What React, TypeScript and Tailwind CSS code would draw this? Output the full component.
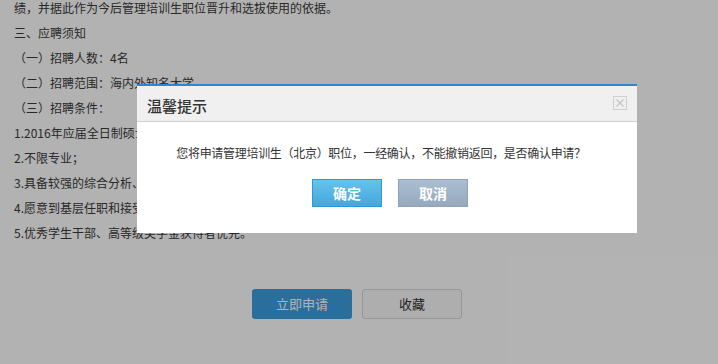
import React from "react";

const lines = [
  "绩，并据此作为今后管理培训生职位晋升和选拔使用的依据。",
  "三、应聘须知",
  "（一）招聘人数：4名",
  "（二）招聘范围：海内外知名大学",
  "（三）招聘条件：",
  "1.2016年应届全日制硕士及以上学历毕业生；",
  "2.不限专业；",
  "3.具备较强的综合分析、沟通协调能力和团队合作精神；",
  "4.愿意到基层任职和接受锻炼；",
  "5.优秀学生干部、高等级奖学金获得者优先。",
];

const ConfirmDialog = () => {
  return (
    <div className="absolute left-[137px] top-[84px] w-[500px] bg-white border-t-2 border-[#2b86d8]">
      {/* Header */}
      <div className="h-[36px] flex items-center justify-between pl-[10px] pr-[10px] bg-[#f0f0f0] border-b border-[#cfcfcf]">
        <span className="text-[15px] font-medium text-[#333] pt-[5px]">温馨提示</span>
        <span className="w-[14px] h-[14px] border border-[#cfcfcf] flex items-center justify-center mb-[2px]">
          <svg width="10" height="10" viewBox="0 0 10 10">
            <path d="M1.5 1.5 L8.5 8.5 M8.5 1.5 L1.5 8.5" stroke="#c4c4c4" strokeWidth="1.3" />
          </svg>
        </span>
      </div>

      {/* Body */}
      <div className="pt-[21px] pb-[26px] flex flex-col items-center">
        <p className="text-[12px] leading-[20px] text-[#333] tracking-[-0.3px] mr-[12px]">
          您将申请管理培训生（北京）职位，一经确认，不能撤销返回，是否确认申请？
        </p>
        <div className="mt-[16px] flex gap-[16px] pl-[6px]">
          <button className="w-[70px] h-[28px] border border-[#2f97d2] bg-linear-to-b from-[#65c4eb] to-[#44a7de] text-white text-[14px] font-bold">
            确定
          </button>
          <button className="w-[70px] h-[28px] border border-[#8ea2b9] bg-linear-to-b from-[#abbed1] to-[#97a8be] text-white text-[14px] font-bold">
            取消
          </button>
        </div>
      </div>
    </div>
  );
};

const App = () => {
  return (
    <div
      className="relative w-[718px] h-[364px] overflow-hidden bg-white"
      style={{ fontFamily: '"Noto Sans CJK SC", "Liberation Sans", sans-serif' }}
    >
      <div className="-mt-[5px] pl-[14px]">
        {lines.map((t) => (
          <p key={t} className="text-[12px] leading-[25px] text-[#3a3a3a] whitespace-nowrap">
            {t}
          </p>
        ))}
        <div className="mt-[44px] pl-[238px] flex gap-[10px]">
          <button className="w-[100px] h-[30px] rounded-[3px] bg-[#3d9fe0] text-white text-[13px]">
            立即申请
          </button>
          <button className="w-[100px] h-[30px] rounded-[3px] border border-[#d9d9d9] bg-[#fafafa] text-[#333] text-[13px]">
            收藏
          </button>
        </div>
      </div>

      {/* Dim overlay */}
      <div className="absolute inset-0 bg-black/30" />

      <ConfirmDialog />
    </div>
  );
};

export default App;
